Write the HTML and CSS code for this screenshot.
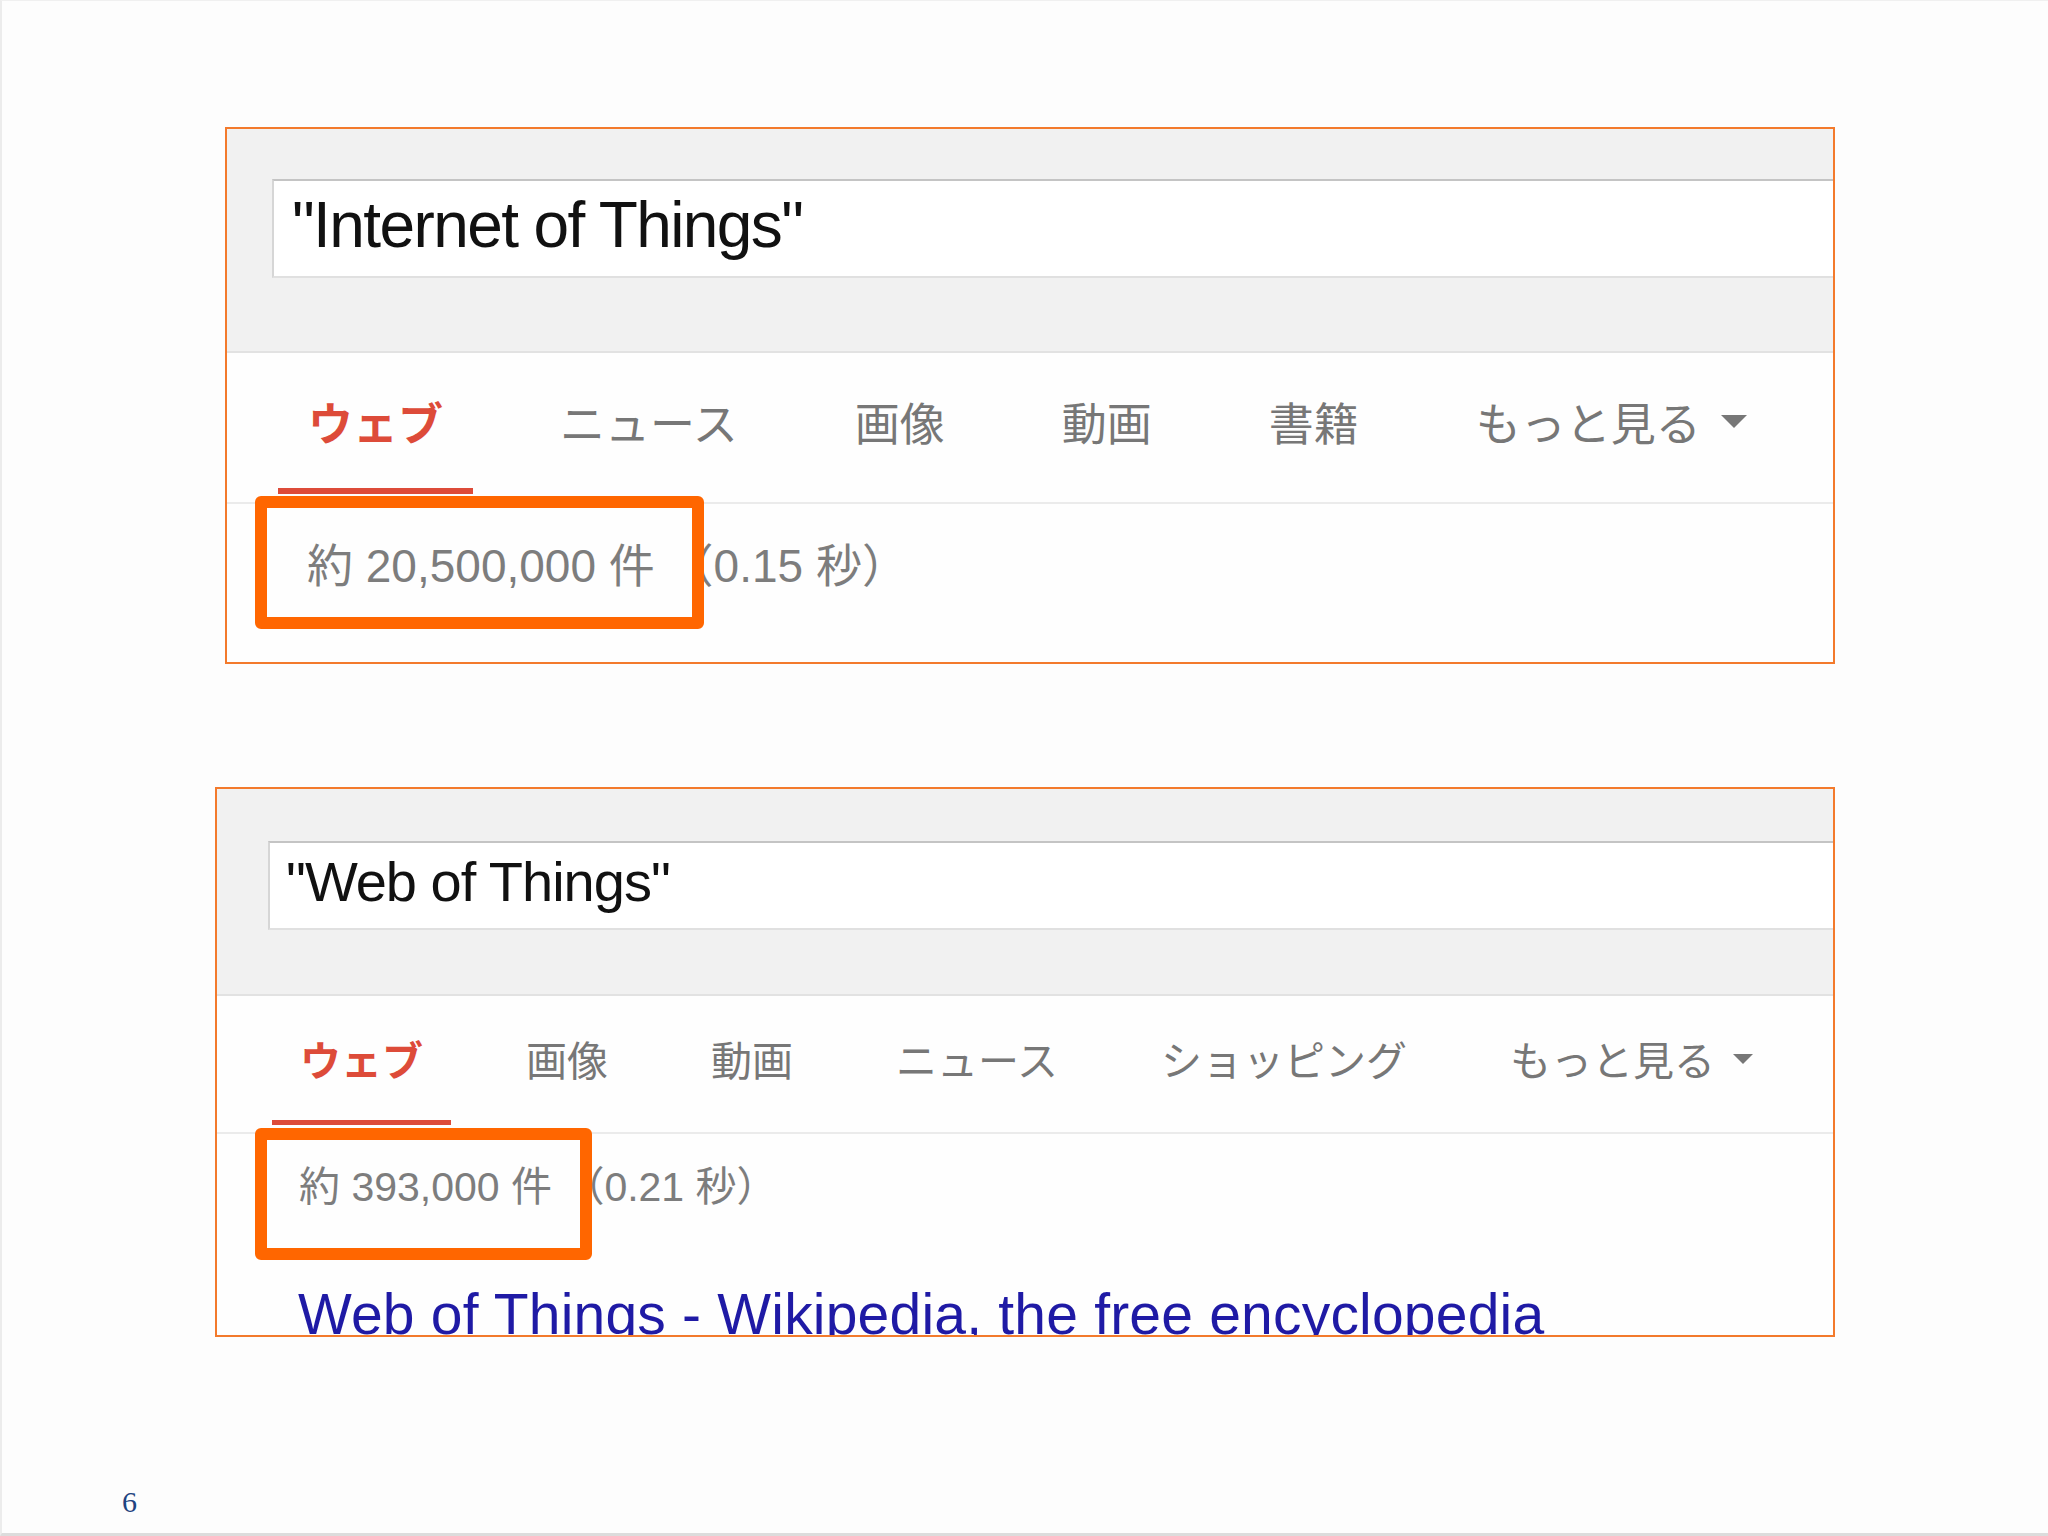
FILE: index.html
```html
<!DOCTYPE html>
<html lang="ja">
<head>
<meta charset="utf-8">
<title>Internet of Things vs Web of Things</title>
<link rel="stylesheet" href="styles.css">
</head>
<body>
<div class="slide">
  <section class="panel p1">
    <div class="head">
      <div class="search">"Internet of Things"</div>
    </div>
    <nav class="tabs">
      <span class="tab active">ウェブ</span>
      <span class="tab">ニュース</span>
      <span class="tab">画像</span>
      <span class="tab">動画</span>
      <span class="tab">書籍</span>
      <span class="tab more">もっと見る<i class="caret"></i></span>
    </nav>
    <div class="stats">約 20,500,000 件 （0.15 秒）</div>
    <div class="hl"></div>
  </section>

  <section class="panel p2">
    <div class="head">
      <div class="search">"Web of Things"</div>
    </div>
    <nav class="tabs">
      <span class="tab active">ウェブ</span>
      <span class="tab">画像</span>
      <span class="tab">動画</span>
      <span class="tab">ニュース</span>
      <span class="tab">ショッピング</span>
      <span class="tab more">もっと見る<i class="caret"></i></span>
    </nav>
    <div class="stats">約 393,000 件 （0.21 秒）</div>
    <div class="result">Web of Things - Wikipedia, the free encyclopedia</div>
    <div class="hl"></div>
  </section>

  <div class="pagenum">6</div>
</div>
</body>
</html>
```

FILE: styles.css
```css
html, body {
  margin: 0;
  padding: 0;
}

body {
  background: #fdfdfd;
  font-family: "Liberation Sans", "Noto Sans CJK JP", sans-serif;
}

.slide {
  width: 2048px;
  height: 1536px;
  box-sizing: border-box;
  padding-top: 126px;
  border-left: 2px solid #ececec;
  border-bottom: 3px solid #dcdcdc;
  border-top: 1px solid #f0f0f0;
  overflow: hidden;
  background: #fdfdfd;
}

.panel {
  position: relative;
  box-sizing: border-box;
  border: 2px solid #f37a2c;
  background: #fefefe;
  overflow: hidden;
}

.head {
  box-sizing: border-box;
  background: #f1f1f1;
  border-bottom: 2px solid #e2e2e2;
  overflow: hidden;
}

.search {
  box-sizing: border-box;
  background: #ffffff;
  border-top: 2px solid #c4c4c4;
  border-left: 2px solid #d6d6d6;
  border-bottom: 2px solid #e0e0e0;
  color: #111;
  white-space: nowrap;
}

.tabs {
  display: flex;
  align-items: flex-start;
  border-bottom: 2px solid #ebebeb;
  font-family: "Noto Sans CJK JP", sans-serif;
}

.tab {
  display: flex;
  align-items: center;
  color: #777777;
  border-bottom-style: solid;
  border-bottom-color: transparent;
  white-space: nowrap;
}

.tab.active {
  color: #dd4b39;
  font-weight: 700;
  border-bottom-color: #dd4b39;
}

.caret {
  display: inline-block;
  width: 0;
  height: 0;
  border-style: solid;
  border-color: #777777 transparent transparent transparent;
}

.stats {
  color: #7d7d7d;
  white-space: nowrap;
}

.hl {
  position: absolute;
  box-sizing: border-box;
  border: 12px solid #ff6600;
  border-radius: 6px;
}

/* ---------- panel 1 ---------- */
.p1 {
  margin-left: 223px;
  width: 1610px;
  height: 537px;
}

.p1 .head {
  height: 224px;
  padding-top: 50px;
}

.p1 .search {
  margin-left: 45px;
  height: 99px;
  padding-left: 18px;
  padding-bottom: 7px;
  font-size: 64px;
  line-height: 88px;
  letter-spacing: -1.6px;
}

.p1 .tabs {
  padding-left: 51px;
  padding-top: 46px;
  gap: 57px;
}

.p1 .tab {
  font-size: 45px;
  line-height: 45px;
  padding: 0 30px 44px;
  border-bottom-width: 6px;
  margin-bottom: 8px;
}

.p1 .caret {
  margin-left: 20px;
  border-width: 13px 13px 0 13px;
}

.p1 .stats {
  padding-top: 39px;
  padding-left: 80px;
  font-size: 46px;
  line-height: 46px;
}

.p1 .hl {
  left: 28px;
  top: 367px;
  width: 449px;
  height: 133px;
}

/* ---------- panel 2 ---------- */
.p2 {
  margin-left: 213px;
  margin-top: 123px;
  width: 1620px;
  height: 550px;
}

.p2 .head {
  height: 207px;
  padding-top: 52px;
}

.p2 .search {
  margin-left: 51px;
  height: 89px;
  padding-left: 16px;
  padding-bottom: 8px;
  font-size: 56px;
  line-height: 77px;
  letter-spacing: -1px;
}

.p2 .tabs {
  padding-left: 55px;
  padding-top: 42px;
  gap: 47px;
}

.p2 .tab {
  font-size: 41px;
  line-height: 41px;
  padding: 0 28px 41px;
  border-bottom-width: 5px;
  margin-bottom: 7px;
}

.p2 .caret {
  margin-left: 18px;
  border-width: 10px 10px 0 10px;
}

.p2 .stats {
  padding-top: 33px;
  padding-left: 82px;
  font-size: 41px;
  line-height: 41px;
}

.p2 .result {
  margin-top: 78px;
  padding-left: 81px;
  font-size: 57px;
  line-height: 57px;
  letter-spacing: 0.2px;
  color: #1f1aa5;
  white-space: nowrap;
}

.p2 .hl {
  left: 38px;
  top: 339px;
  width: 337px;
  height: 132px;
}

/* ---------- page number ---------- */
.pagenum {
  margin-top: 150px;
  margin-left: 120px;
  font-family: "Liberation Serif", serif;
  font-size: 30px;
  line-height: 30px;
  color: #1f4480;
}
```
